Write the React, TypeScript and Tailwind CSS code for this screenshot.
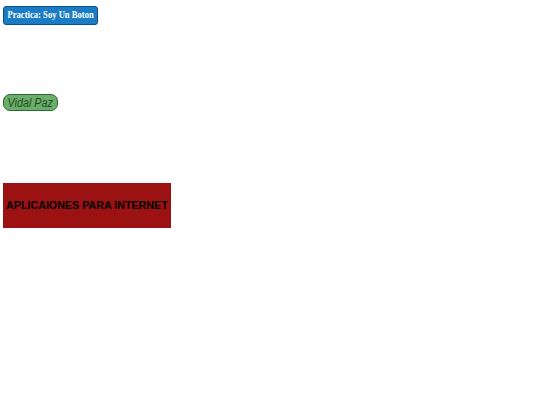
import React from "react";

export default function App() {
  return (
    <div className="w-[540px] h-[405px] bg-white flex flex-col items-start pl-[3px] pt-[6px]">
      <button className="w-[95px] h-[19px] flex items-center justify-center bg-[#1a7cc4] border border-[#0d4f8a] rounded-[3px] text-white font-bold text-[10.5px] leading-none whitespace-nowrap font-['Liberation_Serif',serif]">
        <span className="inline-block scale-x-[0.82]">Practica: Soy Un Boton</span>
      </button>
      <button className="mt-[69px] w-[55px] h-[17px] flex items-center justify-center bg-[#6bae6b] border border-[#2f6b2f] rounded-[7px] text-[#1f4f1f] italic text-[12px] leading-none whitespace-nowrap font-['Liberation_Sans',sans-serif]">
        <span className="inline-block scale-x-[0.9]">Vidal Paz</span>
      </button>
      <div className="mt-[72px] w-[168px] h-[45px] flex items-center justify-center bg-[#9c1111] text-black font-bold text-[11.5px] whitespace-nowrap font-['Liberation_Sans',sans-serif]">
        <span className="inline-block scale-x-[0.93]">APLICAIONES PARA INTERNET</span>
      </div>
    </div>
  );
}
